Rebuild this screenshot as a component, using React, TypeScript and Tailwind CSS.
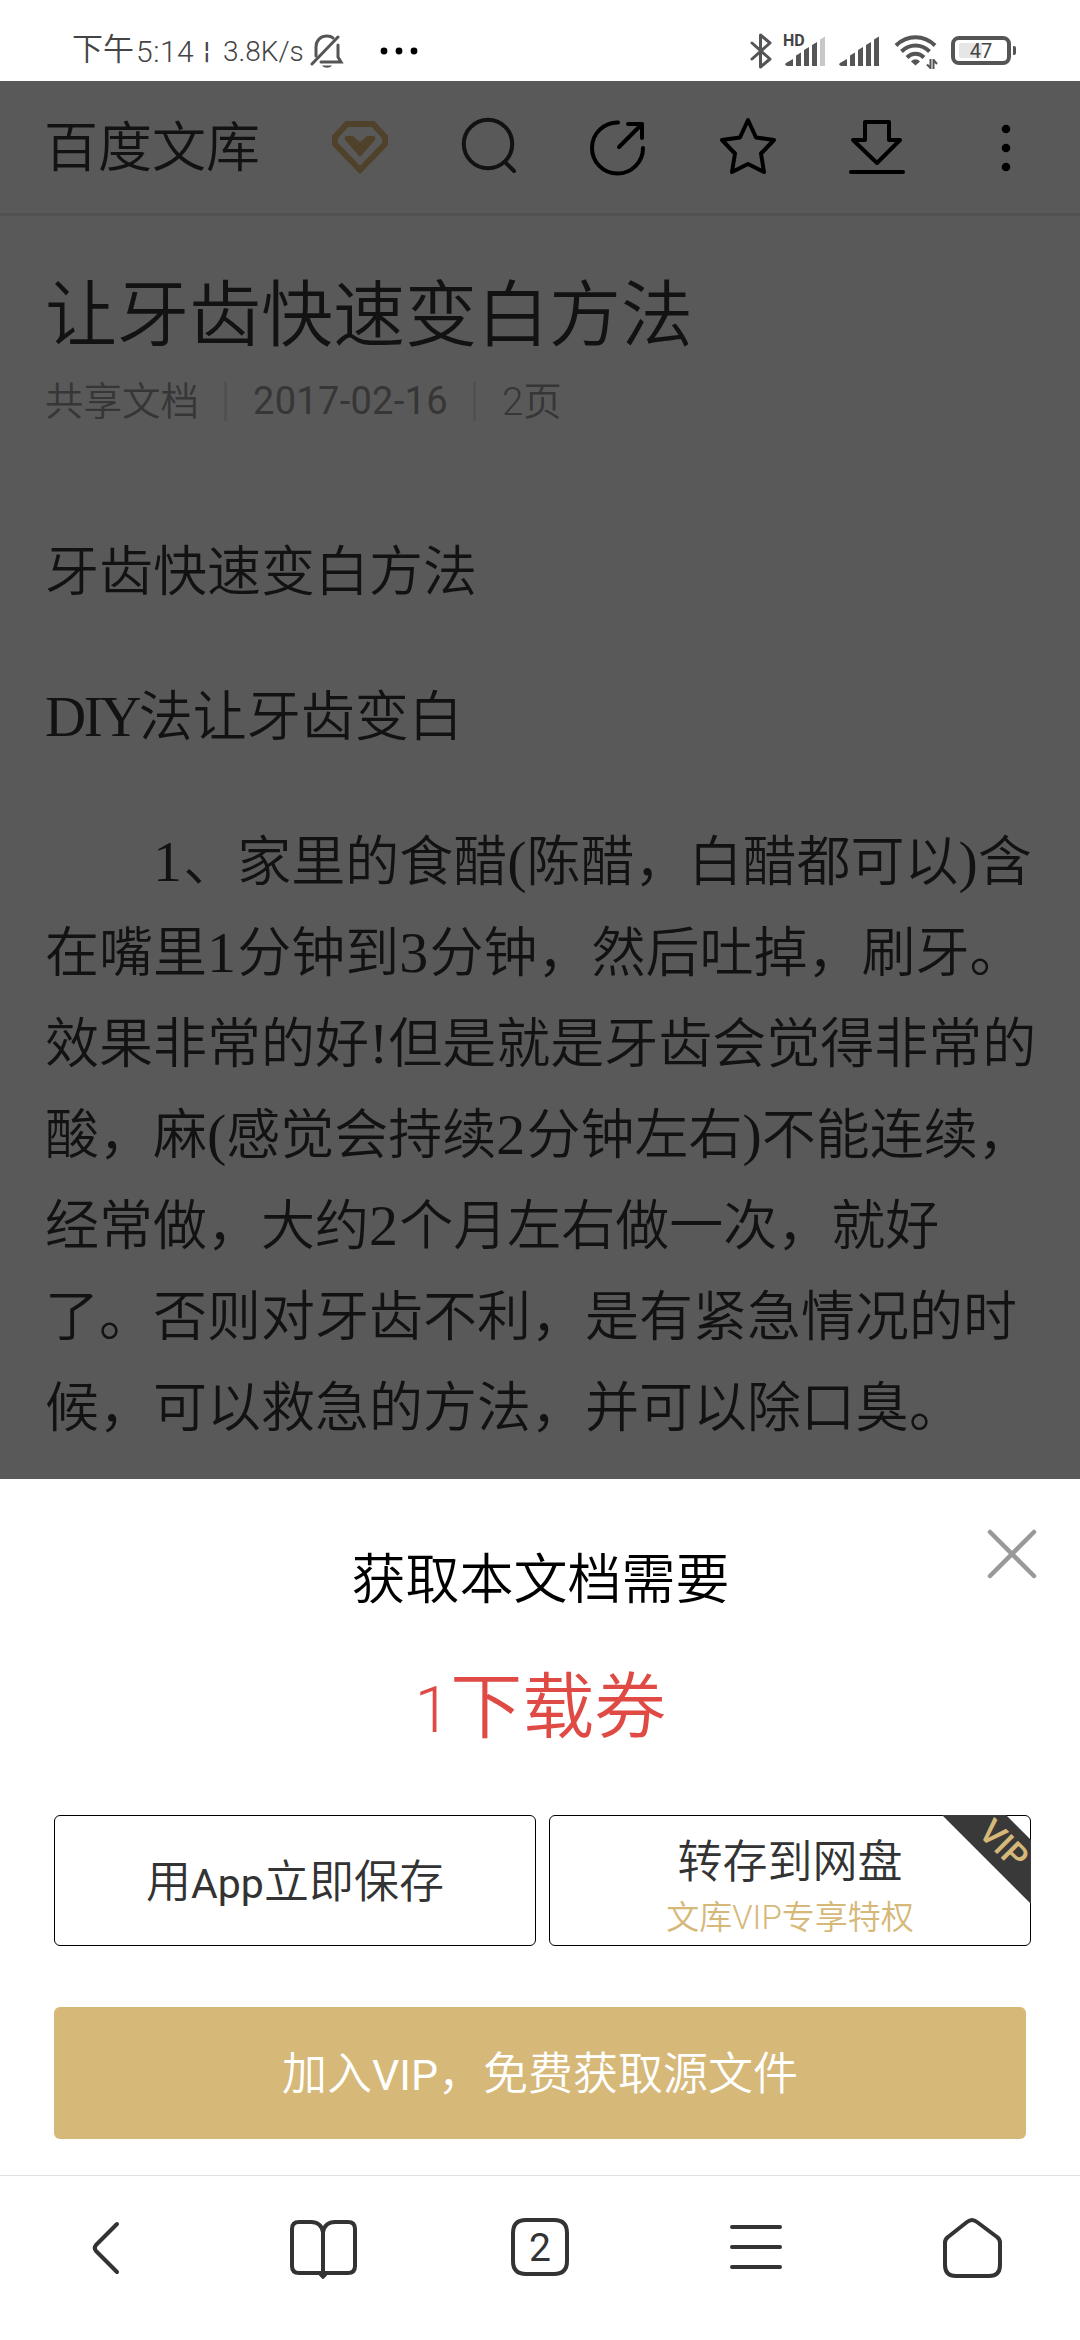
import type { ReactNode } from 'react';

const SANS = 'font-[Roboto,"Noto_Sans_CJK_SC",sans-serif]';

function StatusBar() {
  return (
    <div className="flex h-[81px] items-center bg-white pt-[20px] pr-[64px] pl-[72px] text-[#444]">
      <span className="w-[64px] shrink-0 text-[31px] font-[350] whitespace-nowrap">下午</span>
      <span className="w-[68px] shrink-0 pt-[2px] text-[30px] font-[350] tracking-[0.5px] whitespace-nowrap">5:14</span>
      <span className="w-[19px] shrink-0 text-[24px]">¦</span>
      <span className="w-[87px] shrink-0 pt-[2px] text-[28px] font-[350] whitespace-nowrap">3.8K/s</span>
      <svg className="h-[34px] w-[34px] shrink-0" viewBox="0 0 34 34" fill="none" stroke="#555" strokeWidth="3" strokeLinecap="round">
        <path d="M6 22V13C6 6 11 2 17 2c3 0 5 1 6 2M28 11v12l3 5H11" />
        <path d="M28 3 2 30" />
        <path d="M12 31.500h10c-2 3-8 3-10 0z" fill="#555" stroke="none" />
      </svg>
      <svg className="ml-[36px] h-[8px] w-[40px]" viewBox="0 0 40 8">
        <circle cx="4" cy="4" r="3.400" fill="#000" />
        <circle cx="19" cy="4" r="3.400" fill="#000" />
        <circle cx="34" cy="4" r="3.400" fill="#000" />
      </svg>
      <div className="ml-auto flex items-center">
        <svg className="h-[36px] w-[22px]" viewBox="0 0 22 36" fill="none" stroke="#555" strokeWidth="3" strokeLinecap="round" strokeLinejoin="round">
          <path d="M2 10 20 26 10.500 34V2L20 10 2 26" />
        </svg>
        <div className="relative ml-[13px]">
          <Signal weak />
          <span className="absolute -top-[3px] -left-[2px] text-[16px] leading-[16px] font-bold">HD</span>
        </div>
        <div className="ml-[13px]">
          <Signal />
        </div>
        <svg className="ml-[14px] h-[36px] w-[44px]" viewBox="0 0 44 36" fill="none" stroke="#555" strokeWidth="4">
          <path d="M2 12.500C13 1.500 30 1.500 41 12.500" />
          <path d="M7.500 18.500c8-8 20-8 28 0" />
          <path d="M13 24.500c5-5 12-5 17 0" />
          <path d="M17 28.500c3-3 6-3 9 0l-4.500 4z" fill="#555" stroke="none" />
          <path d="M36.500 26v10M33 31.500l3 3M39.500 36V26M43 31l-3-3.500" strokeWidth="2" />
        </svg>
        <div className="relative ml-[13px] flex h-[29px] w-[60px] items-center justify-center rounded-[8px] border-[4px] border-[#555]">
          <span className="absolute top-[3px] left-[4px] h-[15px] w-[23px] rounded-[2px] bg-[#e6e6e6]" />
          <span className="relative text-[20px] leading-[20px]">47</span>
        </div>
        <span className="ml-[2px] h-[9px] w-[3px] rounded-r-[2px] bg-[#555]" />
      </div>
    </div>
  );
}

function Signal({ weak }: { weak?: boolean }) {
  return (
    <svg className="h-[30px] w-[41px]" viewBox="0 0 41 30" fill="#555">
      <path d="M8 23v7H2q-3-1-1-3z" />
      <path d="M11 19.500l5-3V30h-5zM19 14l5-3V30h-5zM27 9l5-3V30h-5z" />
      <path d="M35 3.500l5-3V30h-5z" fill={weak ? '#c8c8c8' : '#555'} />
    </svg>
  );
}

function IconCell({ children }: { children: ReactNode }) {
  return (
    <div className="flex flex-1 items-center justify-center">
      <svg className="h-[64px] w-[64px]" viewBox="0 0 64 64" fill="none" stroke="#000" strokeWidth="4" strokeLinecap="round" strokeLinejoin="round">
        {children}
      </svg>
    </div>
  );
}

// Icons share a 64px box centred in equal-width cells.
function DocHeader() {
  return (
    <header className="flex h-[135px] items-start border-b-[3px] border-[#515151] pr-[9px] pl-[44px]">
      <h1 className="mt-[28px] w-[251px] text-[54px] leading-[80px] font-[350] text-[#121212]">百度文库</h1>
      <div className="mt-[35px] flex flex-1">
        <IconCell>
          <path d="M19 8h26l12 13v7L32 54 7 28v-7z" stroke="#50422a" strokeWidth="6" strokeLinejoin="miter" />
          <path d="M18 20h7l7 6.500 7-6.500h7q2 1 1 4L32 41 17 24q-1-3 1-4z" fill="#50422a" stroke="none" />
        </IconCell>
        <IconCell>
          <g stroke="#121212">
            <circle cx="31" cy="28" r="24.200" />
            <path d="M48 46l9 9" />
          </g>
        </IconCell>
        <IconCell>
          <path d="M32 6.500A25.500 25.500 0 1 0 57 32" />
          <path d="M33 31 56 8M42 8h14v14" />
        </IconCell>
        <IconCell>
          <path d="M32 4l8 17.500 18 2.500-13 13.500 3 18.500-16-8-16 8 3-18.500L6 24l18-2.500z" />
        </IconCell>
        <IconCell>
          <path d="M20 6h24v18h11L32 47 8 24h12z" />
          <path d="M6 56h52" />
        </IconCell>
        <IconCell>
          <g fill="#000" stroke="none">
            <circle cx="32" cy="13" r="4.300" />
            <circle cx="32" cy="32" r="4.300" />
            <circle cx="32" cy="51" r="4.300" />
          </g>
        </IconCell>
      </div>
    </header>
  );
}

// Serif brackets inside the Chinese body text
function L({ children }: { children: ReactNode }) {
  return <span className='font-["Liberation_Serif",serif] text-[58px] leading-none font-normal'>{children}</span>;
}

// Serif figures, set slightly looser than the brackets
function Num({ children }: { children: ReactNode }) {
  return <span className='font-["Liberation_Serif",serif] text-[58px] leading-none font-normal tracking-[1.2px]'>{children}</span>;
}

function Line({ children, indent }: { children: ReactNode; indent?: boolean }) {
  return <div className={`h-[91px] whitespace-nowrap ${indent ? 'pl-[108px]' : ''}`}>{children}</div>;
}

function DocBody() {
  return (
    <main className="px-[45px] text-[#121212]">
      <h2 className="mt-[50px] text-[72px] leading-[100px] font-[350] whitespace-nowrap">让牙齿快速变白方法</h2>
      <div className="mt-[16px] flex h-[39px] items-center text-[38.5px] leading-[39px] font-[350] text-[#363636]">
        <span>共享文档</span>
        <span className="ml-[25px] h-[39px] w-[3px] bg-[#505050]" />
        <span className="ml-[26px] w-[197px] text-[38px] font-normal tracking-[0.3px] whitespace-nowrap">2017-02-16</span>
        <span className="ml-[23px] h-[39px] w-[3px] bg-[#505050]" />
        <span className="ml-[26px]">2页</span>
      </div>
      <div className="mt-[106px] text-[54px] leading-[91px] font-[350]">
        <Line>牙齿快速变白方法</Line>
        <div className="mt-[54px]">
          <Line>
            <span className='font-["Liberation_Serif",serif] text-[57px] leading-none font-normal tracking-[-2.5px]'>DIY</span>法让牙齿变白
          </Line>
        </div>
        <div className="mt-[54px]">
          <Line indent>
            <Num>1</Num>、家里的食醋<L>(</L>陈醋，白醋都可以<L>)</L>含
          </Line>
          <Line>
            在嘴里<Num>1</Num>分钟到<Num>3</Num>分钟，然后吐掉，刷牙。
          </Line>
          <Line>
            效果非常的好<L>!</L>但是就是牙齿会觉得非常的
          </Line>
          <Line>
            酸，麻<L>(</L>感觉会持续<Num>2</Num>分钟左右<L>)</L>不能连续，
          </Line>
          <Line>
            经常做，大约<Num>2</Num>个月左右做一次，就好
          </Line>
          <Line>了。否则对牙齿不利，是有紧急情况的时</Line>
          <Line>候，可以救急的方法，并可以除口臭。</Line>
        </div>
      </div>
    </main>
  );
}

function DownloadSheet() {
  return (
    <section className="relative h-[696px] bg-white pt-[67px] pl-[54px]">
      <svg className="absolute top-[50px] right-[43px] h-[50px] w-[50px]" viewBox="0 0 50 50" stroke="#999" strokeWidth="4.500" strokeLinecap="round">
        <path d="M3 3l44 44M47 3 3 47" />
      </svg>
      <div className="w-[973px]">
        <p className="text-center text-[54px] leading-[70px] font-[350] text-black">获取本文档需要</p>
        <p className="mt-[42px] text-center text-[72px] leading-[100px] font-[350] text-[#e04a44]">
          <span className="text-[64px] leading-none">1</span>下载券
        </p>
      </div>
      <div className="mt-[57px] flex gap-[13px]">
        <button className="flex h-[131px] w-[482px] items-center justify-center rounded-[6px] border border-black pt-[4px] text-[45px] font-[350] text-[#333]">
          <span>
            用<span className="text-[41px] font-normal">App</span>立即保存
          </span>
        </button>
        <button className="relative flex h-[131px] w-[482px] flex-col items-center rounded-[6px] border border-black pt-[17px] font-[350]">
          <span className="text-[45px] leading-[60px] text-[#333]">转存到网盘</span>
          <span className="mt-[2px] text-[33px] leading-[46px] whitespace-nowrap text-[#d6b878]">文库VIP专享特权</span>
          <svg className="absolute -top-[1px] -right-[1px] h-[89px] w-[89px]" viewBox="0 0 89 89">
            <path d="M0 0h64l25 25v64z" fill="#393939" />
          </svg>
          <span className="absolute top-[16px] right-[-1px] w-[54px] rotate-45 text-center text-[34px] leading-[24px] font-medium text-[#d6b878]">VIP</span>
        </button>
      </div>
      <button className="mt-[61px] flex h-[132px] w-[972px] items-center justify-center rounded-[6px] bg-[#d6b878] pt-[3px] text-[45px] font-[350] text-white">
        <span>
          加入<span className="text-[43px] font-normal">VIP</span>，免费获取源文件
        </span>
      </button>
    </section>
  );
}

function NavCell({ children }: { children: ReactNode }) {
  return (
    <div className="flex flex-1 justify-center pt-[36px]">
      <svg className="h-[72px] w-[72px]" viewBox="0 0 72 72" fill="none" stroke="#333" strokeWidth="4" strokeLinecap="round" strokeLinejoin="round">
        {children}
      </svg>
    </div>
  );
}

function BrowserNav() {
  return (
    <nav className="flex h-[165px] border-t border-[#e0e0e0] bg-white">
      <NavCell>
        <path d="M45 12 24 33q-2.500 3 0 6L45 60" />
      </NavCell>
      <NavCell>
        <path d="M35 20q-2-10-12-10H11q-7 0-7 7v37q0 7 7 7h49q7 0 7-7V17q0-7-7-7H47q-10 0-12 10v41" />
        <path d="M32 63h6l-3 3z" fill="#333" strokeWidth="2" />
      </NavCell>
      <NavCell>
        <path d="M22 8h28q13 0 13 13v28q0 13-13 13H22Q9 62 9 49V21Q9 8 22 8z" />
        <text x="36" y="49" fill="#333" stroke="none" fontSize="39" fontFamily="Roboto, sans-serif" textAnchor="middle">
          2
        </text>
      </NavCell>
      <NavCell>
        <path d="M12 15h48M12 35h48M12 55h48" />
      </NavCell>
      <NavCell>
        <path d="M31 10q5-4 10 0l20 15q3 2 3 6v22q0 11-11 11H20Q9 64 9 53V31q0-4 3-6z" />
      </NavCell>
    </nav>
  );
}

export default function App() {
  return (
    <div className={`flex h-[2340px] w-[1080px] flex-col overflow-hidden bg-[#595959] ${SANS}`}>
      <StatusBar />
      <div className="h-[1398px] shrink-0 overflow-hidden">
        <DocHeader />
        <DocBody />
      </div>
      <DownloadSheet />
      <BrowserNav />
    </div>
  );
}
